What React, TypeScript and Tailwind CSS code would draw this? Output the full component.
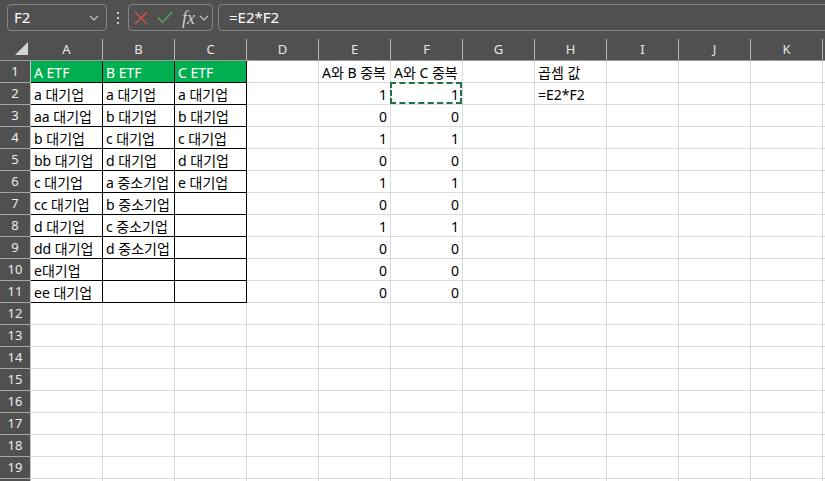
import React from "react";

const COLS = ["A", "B", "C", "D", "E", "F", "G", "H", "I", "J", "K"];

type Cell = { v?: string; right?: boolean };

const colA = ["A ETF", "a 대기업", "aa 대기업", "b 대기업", "bb 대기업", "c 대기업", "cc 대기업", "d 대기업", "dd 대기업", "e대기업", "ee 대기업"];
const colB = ["B ETF", "a 대기업", "b 대기업", "c 대기업", "d 대기업", "a 중소기업", "b 중소기업", "c 중소기업", "d 중소기업", "", ""];
const colC = ["C ETF", "a 대기업", "b 대기업", "c 대기업", "d 대기업", "e 대기업", "", "", "", "", ""];
const dup = ["1", "0", "1", "0", "1", "0", "1", "0", "0", "0"];

function cellAt(r: number, c: number): Cell {
  // r is 1-based row, c is column index
  if (r <= 11) {
    if (c === 0) return { v: colA[r - 1] };
    if (c === 1) return { v: colB[r - 1] };
    if (c === 2) return { v: colC[r - 1] };
  }
  if (c === 4) {
    if (r === 1) return { v: "A와 B 중복" };
    if (r <= 11) return { v: dup[r - 2], right: true };
  }
  if (c === 5) {
    if (r === 1) return { v: "A와 C 중복" };
    if (r <= 11) return { v: dup[r - 2], right: true };
  }
  if (c === 7) {
    if (r === 1) return { v: "곱셈 값" };
    if (r === 2) return { v: "=E2*F2" };
  }
  return {};
}

function Chevron() {
  return (
    <svg width="10" height="6" viewBox="0 0 10 6" fill="none">
      <path d="M1 1l4 4 4-4" stroke="#c4c4c4" strokeWidth="1.2" />
    </svg>
  );
}

function Toolbar() {
  return (
    <div className="flex h-[38px] items-start bg-[#505050] pt-[4px]">
      <div className="ml-[7px] flex h-[27px] w-[100px] items-center justify-between rounded-[4px] border border-[#858585] pl-[6px] pr-[7px]">
        <span className="text-[15px] text-white">F2</span>
        <Chevron />
      </div>
      <div className="flex h-[27px] w-[21px] flex-col items-center justify-center gap-[3px]">
        <span className="h-[2px] w-[2px] bg-[#d0d0d0]" />
        <span className="h-[2px] w-[2px] bg-[#d0d0d0]" />
        <span className="h-[2px] w-[2px] bg-[#d0d0d0]" />
      </div>
      <div className="flex h-[27px] w-[85px] items-center rounded-[4px] border border-[#858585] pl-[5px]">
        <svg width="14" height="14" viewBox="0 0 14 14" fill="none">
          <path d="M1 1l12 12M13 1L1 13" stroke="#e0514b" strokeWidth="1.3" />
        </svg>
        <svg className="ml-[9px]" width="16" height="13" viewBox="0 0 16 13" fill="none">
          <path d="M1 6.5l4.5 5L15 1" stroke="#52b05a" strokeWidth="1.3" />
        </svg>
        <span className="ml-[9px] font-['Liberation_Serif',serif] text-[18px] italic leading-none text-[#cfcfcf]">fx</span>
        <span className="ml-[4px]">
          <Chevron />
        </span>
      </div>
      <div className="-mr-[20px] ml-[5px] flex h-[27px] flex-1 items-center rounded-[4px] border border-[#858585] pl-[10px]">
        <span className="text-[15px] text-white">=E2*F2</span>
      </div>
    </div>
  );
}

function HeaderRow() {
  return (
    <div className="flex h-[23px] border-b border-[#9a9a9a] bg-[#505050]">
      <div className="relative w-[31px] shrink-0 border-r border-[#505050]">
        <svg className="absolute left-[15px] top-[4px]" width="13" height="13" viewBox="0 0 13 13">
          <path d="M13 0V13H0Z" fill="#d4d4d4" />
        </svg>
      </div>
      {COLS.map((c) => (
        <div key={c} className="flex w-[72px] shrink-0 items-end">
          <div className="flex h-[21px] w-full items-center justify-center border-r border-[#b8b8b8] text-[13px] text-[#e8e8e8]">
            {c}
          </div>
        </div>
      ))}
      <div className="flex-1" />
    </div>
  );
}

function Row({ r, label = true }: { r: number; label?: boolean }) {
  return (
    <div className="flex h-[22px]">
      <div className="flex w-[31px] shrink-0 items-center justify-center border-b border-r border-b-[#a6a6a6] border-r-[#c8c8c8] bg-[#505050] text-[13px] text-[#ececec]">
        {label ? r : null}
      </div>
      {COLS.map((_, c) => {
        const cell = cellAt(r, c);
        const inTable = r <= 11 && c <= 2;
        const green = r === 1 && c <= 2;
        const selected = r === 2 && c === 5;
        return (
          <div
            key={c}
            className={
              "relative flex w-[72px] shrink-0 items-center whitespace-nowrap border-b border-r px-[3px] pt-[1px] text-[14px] " +
              (inTable ? "border-black " : "border-[#dadada] ") +
              (green ? "bg-[#00b050] text-white " : "text-black ") +
              (cell.right ? "justify-end" : "justify-start")
            }
          >
            {cell.v}
            {selected && (
              <div className="absolute -left-[1px] -top-[1px] bottom-0 right-0 border-2 border-dashed border-[#217346]" />
            )}
          </div>
        );
      })}
      <div className="flex-1 border-b border-[#dadada]" />
    </div>
  );
}

export default function App() {
  const rows = Array.from({ length: 19 }, (_, i) => i + 1);
  return (
    <div className="h-[481px] w-[825px] overflow-hidden bg-white font-['Noto_Sans','Noto_Sans_CJK_KR',sans-serif]">
      <Toolbar />
      <HeaderRow />
      {rows.map((r) => (
        <Row key={r} r={r} />
      ))}
      <Row r={20} label={false} />
    </div>
  );
}
